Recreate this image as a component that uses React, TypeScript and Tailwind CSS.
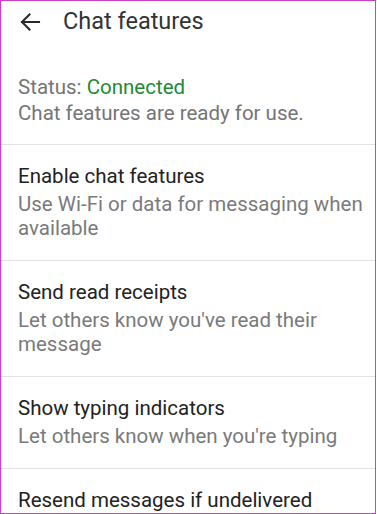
import React from "react";

function Item({ title, sub }: { title: string; sub: string }) {
  return (
    <div className="border-t border-[#e3e3e3] pl-[17px] pr-1 pt-[19px] pb-[20px]">
      <div className="text-[20.5px] leading-[24px] text-[#222222]">{title}</div>
      {sub && <div className="mt-[4px] text-[20.5px] leading-[24px] text-[#7a7a7a]">{sub}</div>}
    </div>
  );
}

export default function App() {
  return (
    <div
      className="w-[376px] h-[514px] overflow-hidden border border-[#c93fcb] bg-white"
      style={{ fontFamily: "Roboto, 'Liberation Sans', sans-serif" }}
    >
      <div className="flex items-center h-[41px]">
        <svg className="ml-[17px]" width="24" height="24" viewBox="0 0 24 24" fill="none">
          <path d="M21 12H4M11.5 4.5 4 12l7.5 7.5" stroke="#2a2a2a" strokeWidth="2.1" strokeLinecap="square" />
        </svg>
        <div className="ml-[21px] text-[23.5px] text-[#333333]">Chat features</div>
      </div>
      <div className="pl-[17px] pt-[31px] pb-[19px]">
        <div className="text-[20.5px] leading-[28px] text-[#757575]">
          Status: <span className="text-[#1e8a35]">Connected</span>
        </div>
        <div className="text-[20.5px] leading-[24px] text-[#757575]">Chat features are ready for use.</div>
      </div>
      <Item title="Enable chat features" sub="Use Wi-Fi or data for messaging when available" />
      <Item title="Send read receipts" sub="Let others know you've read their message" />
      <Item title="Show typing indicators" sub="Let others know when you're typing" />
      <Item title="Resend messages if undelivered" sub="" />
    </div>
  );
}
